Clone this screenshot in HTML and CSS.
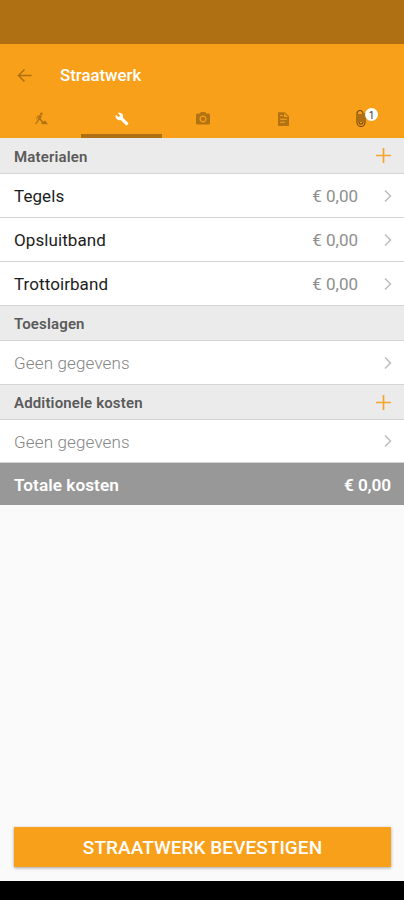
FILE: index.html
```html
<!DOCTYPE html>
<html lang="nl">
<head>
<meta charset="utf-8">
<title>Straatwerk</title>
<link rel="stylesheet" href="styles.css">
</head>
<body>
<div class="status"></div>
<header class="header">
  <div class="bar">
    <svg class="back" viewBox="0 0 16 16"><path d="M15.5 8H1.5M8 1.5 1.5 8 8 14.5"/></svg>
    <h1 class="title">Straatwerk</h1>
  </div>
  <nav class="tabs">
    <div class="tab"><svg class="icon worker" viewBox="0 0 16 16"><circle cx="8.4" cy="2.2" r="1.500"/><path d="M3.500 4.500 7 3.500l2 1.300-1.400 3 2.600 2.400L10 14H8.800L8.400 11 6.200 8.800 4.800 11 2 14 1 13.200 3.800 10 5.400 5.300 4 6 3.400 8.200H2.300zM8.500 14l2.500-3.400 1.800-.8 3.200 4.200z"/></svg></div>
    <div class="tab active"><svg class="icon wrench" viewBox="0 0 24 24"><path d="M22.700 19l-9.100-9.100c.9-2.300.4-5-1.500-6.900-2-2-5-2.400-7.400-1.300L9 6 6 9 1.600 4.700C.4 7.100.9 10.100 2.900 12.100c1.900 1.900 4.600 2.400 6.900 1.500l9.100 9.100c.4.400 1 .4 1.400 0l2.300-2.300c.5-.4.500-1.100.1-1.400z"/></svg></div>
    <div class="tab"><svg class="icon camera" viewBox="2 2 20 20"><circle cx="12" cy="12" r="3.200"/><path d="M9 2 7.170 4H4c-1.100 0-2 .9-2 2v12c0 1.100.9 2 2 2h16c1.100 0 2-.9 2-2V6c0-1.100-.9-2-2-2h-3.170L15 2H9zm3 15c-2.760 0-5-2.240-5-5s2.240-5 5-5 5 2.240 5 5-2.240 5-5 5z"/></svg></div>
    <div class="tab"><svg class="icon note" viewBox="4 2 16 20"><path fill-rule="evenodd" d="M4 2h10l6 6v14H4V2zm9 1.500V9h5.500zM7 6v1.500h4V6zM7 11.500V13h10v-1.500zM7 16v1.500h7V16z"/></svg></div>
    <div class="tab"><span class="attach"><svg class="clip" viewBox="0 0 10 18"><path d="M3 5v8a2 2 0 0 0 4 0V4.500a3 3 0 0 0-6 0v9a4 4 0 0 0 8 0V4M5 5v8"/></svg><span class="badge">1</span></span></div>
  </nav>
</header>
<main class="content">
  <div class="section first"><span>Materialen</span><svg class="plus" viewBox="0 0 15 15"><path d="M7.500 0v15M0 7.500h15"/></svg></div>
  <div class="row"><span>Tegels</span><span class="price">€ 0,00</span><svg class="chevron" viewBox="0 0 8 12"><path d="m1 .5 5.500 5.500L1 11.500"/></svg></div>
  <div class="row"><span>Opsluitband</span><span class="price">€ 0,00</span><svg class="chevron" viewBox="0 0 8 12"><path d="m1 .5 5.500 5.500L1 11.500"/></svg></div>
  <div class="row"><span>Trottoirband</span><span class="price">€ 0,00</span><svg class="chevron" viewBox="0 0 8 12"><path d="m1 .5 5.500 5.500L1 11.500"/></svg></div>
  <div class="section"><span>Toeslagen</span></div>
  <div class="row empty"><span>Geen gegevens</span><svg class="chevron" viewBox="0 0 8 12"><path d="m1 .5 5.500 5.500L1 11.500"/></svg></div>
  <div class="section"><span>Additionele kosten</span><svg class="plus" viewBox="0 0 15 15"><path d="M7.500 0v15M0 7.500h15"/></svg></div>
  <div class="row empty last"><span>Geen gegevens</span><svg class="chevron" viewBox="0 0 8 12"><path d="m1 .5 5.500 5.500L1 11.500"/></svg></div>
  <div class="total"><span>Totale kosten</span><span class="sum">€ 0,00</span></div>
</main>
<footer class="footer"><button class="confirm">STRAATWERK BEVESTIGEN</button></footer>
<div class="navbar"></div>
</body>
</html>
```
FILE: styles.css
```css
* { box-sizing: border-box; }
body {
  margin: 0;
  height: 900px;
  display: flex;
  flex-direction: column;
  background: #fafafa;
  font-family: Roboto, "Liberation Sans", sans-serif;
  overflow: hidden;
}
svg { display: block; flex: none; }
.status { height: 44px; background: #ae7012; }
.header { height: 94px; background: #f9a01b; }
.bar { height: 63px; display: flex; align-items: center; padding-left: 17px; }
.back { width: 15px; height: 15px; fill: none; stroke: #ae7012; stroke-width: 1.6; }
.title { margin: 0 0 1px 28px; font-size: 16.800px; font-weight: 500; color: #fff; }
.tabs { display: flex; height: 31px; }
.tab {
  flex: 1;
  display: flex;
  justify-content: center;
  padding-top: 5px;
  border-bottom: 4px solid transparent;
}
.tab.active { border-color: #ae7012; }
.icon { width: 14px; height: 14px; fill: #b37312; }
.worker { margin-left: 1px; }
.wrench { margin-left: 2px; fill: #fff; }
.camera { margin-left: 2px; }
.note { width: 11px; margin-left: 1px; }
.attach { position: relative; width: 10px; height: 18px; margin: -3px 5px 0 0; }
.clip { width: 10px; height: 18px; fill: none; stroke: #70480c; stroke-width: 1.1; }
.badge {
  position: absolute;
  left: 9px;
  top: -1px;
  width: 13px;
  height: 13px;
  border-radius: 50%;
  background: #fff;
  color: #333;
  font-size: 10px;
  line-height: 15px;
  text-align: center;
}
.section {
  height: 35px;
  display: flex;
  align-items: center;
  justify-content: space-between;
  padding: 0 13px 0 14px;
  background: #ebebeb;
  border-bottom: 1px solid #d4d4d4;
  color: #5a5a5a;
  font-size: 15px;
  font-weight: 600;
  letter-spacing: .15px;
}
.section span { padding-top: 2px; }
.section.first { height: 36px; }
.plus { width: 15px; height: 15px; fill: none; stroke: #f5a42e; stroke-width: 1.700; }
.row {
  height: 44px;
  display: flex;
  align-items: center;
  padding: 0 12px 0 14px;
  background: #fff;
  border-bottom: 1px solid #d4d4d4;
  color: #1c1c1c;
  font-size: 17px;
  letter-spacing: .08px;
}
.row span { padding-top: 0; }
.price { margin-left: auto; margin-right: 26px; color: #8e8e8e; letter-spacing: 0; }
.chevron { width: 8px; height: 12px; fill: none; stroke: #bdbdbd; stroke-width: 1.500; }
.empty { color: #858585; font-weight: 300; letter-spacing: .15px; }
.empty .chevron { margin-left: auto; }
.last { height: 43px; }
.row.last span { padding-top: 2px; }
.total {
  height: 42px;
  display: flex;
  align-items: center;
  justify-content: space-between;
  padding: 2px 13px 0 14px;
  background: #989898;
  color: #fff;
  font-size: 17.200px;
  font-weight: 600;
  letter-spacing: .05px;
}
.sum { letter-spacing: -.1px; }
.footer { margin-top: auto; padding: 0 13px 14px 14px; }
.confirm {
  display: block;
  width: 100%;
  height: 40px;
  padding: 1px 0 0;
  border: 0;
  background: #f9a01b;
  color: #fff;
  font: 500 19px Roboto, "Liberation Sans", sans-serif;
  letter-spacing: .05px;
  box-shadow: 0 1px 3px rgba(0, 0, 0, .35);
}
.navbar { height: 19px; background: #000; }
```
